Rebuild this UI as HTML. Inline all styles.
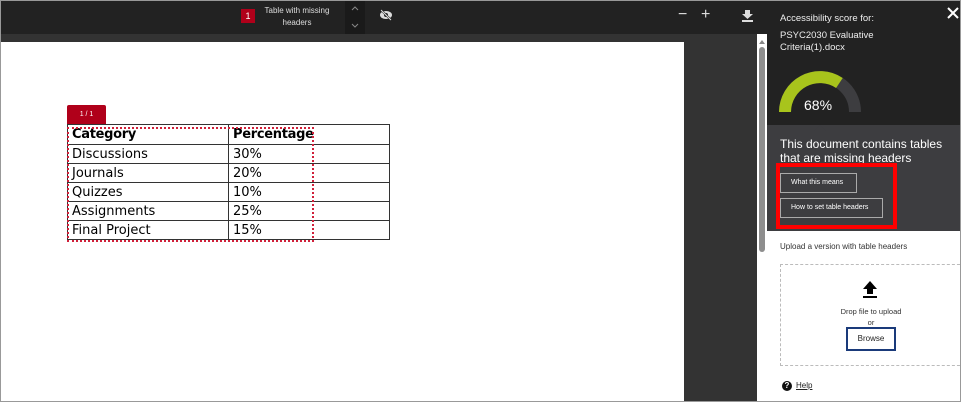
<!DOCTYPE html>
<html><head><style>
*{margin:0;padding:0;box-sizing:border-box}
body{width:961px;height:402px;overflow:hidden;position:relative;font-family:"Liberation Sans",sans-serif;background:#333}
.abs{position:absolute}
td{border:1px solid #333;padding:0 4px;white-space:nowrap}
</style></head><body>
<div class="abs" style="left:0;top:0;width:961px;height:402px;border:1px solid #999;z-index:9;pointer-events:none"></div>
<div class="abs" style="left:0;top:0;width:767px;height:34px;background:#222"></div>
<div class="abs" style="left:241px;top:9px;width:14px;height:14px;background:#b0001a;color:#fff;font-size:9px;text-align:center;line-height:14px">1</div>
<div class="abs" style="left:262px;top:5px;width:70px;color:#ddd;font-size:8px;text-align:center;line-height:12px">Table with missing<br>headers</div>
<div class="abs" style="left:345px;top:0;width:20px;height:34px;background:#1a1a1a"></div>
<svg class="abs" style="left:350px;top:4px" width="10" height="26" viewBox="0 0 10 26"><path d="M2 6l3-3 3 3 M2 20l3 3 3-3" fill="none" stroke="#888" stroke-width="1"/></svg>
<svg class="abs" style="left:379px;top:9px" width="14" height="12" viewBox="0 0 14 12"><ellipse cx="7" cy="6" rx="6" ry="4" fill="#ddd"/><circle cx="7" cy="6" r="2" fill="#222"/><line x1="2" y1="1" x2="12" y2="11" stroke="#222" stroke-width="2"/><line x1="2" y1="1" x2="12" y2="11" stroke="#ddd" stroke-width="1"/></svg>
<div class="abs" style="left:678px;top:6px;color:#ddd;font-size:16px">&minus;</div>
<div class="abs" style="left:701px;top:6px;color:#ddd;font-size:16px">+</div>
<svg class="abs" style="left:742px;top:10px" width="11" height="12" viewBox="0 0 11 12"><path d="M3 0h5v4h3L5.5 9 0 4h3z M0 10h11v2H0z" fill="#ddd"/></svg>
<div class="abs" style="left:0;top:42px;width:684px;height:360px;background:#fff"></div>
<div class="abs" style="left:757px;top:34px;width:10px;height:368px;background:#fff"></div>
<div class="abs" style="left:759px;top:47px;width:6px;height:205px;background:#8e8e8e;border-radius:3px"></div>
<div class="abs" style="left:759px;top:37px;width:0;height:0;border:3px solid transparent;border-bottom:4px solid #888"></div>
<div class="abs" style="left:67px;top:105px;width:39px;height:20px;background:#b0001a;color:#fff;font-size:7px;text-align:center;line-height:19px;border-radius:2px 2px 0 0">1 / 1</div>
<table class="abs" style="left:67px;top:124px;border-collapse:collapse;font-family:'DejaVu Sans',sans-serif;font-size:13px;color:#000;table-layout:fixed;width:322px">
<col style="width:161px"><col style="width:161px">
<tr style="font-weight:bold;letter-spacing:-0.3px"><td style="height:20px">Category</td><td>Percentage</td></tr>
<tr><td style="height:19px">Discussions</td><td>30%</td></tr>
<tr><td style="height:19px">Journals</td><td>20%</td></tr>
<tr><td style="height:19px">Quizzes</td><td>10%</td></tr>
<tr><td style="height:19px">Assignments</td><td>25%</td></tr>
<tr><td style="height:19px">Final Project</td><td>15%</td></tr>
</table>
<div class="abs" style="left:67px;top:127px;width:247px;height:115px;border:2px dotted #d0203a"></div>
<div class="abs" style="left:767px;top:0;width:194px;height:125px;background:#222"></div>
<div class="abs" style="left:767px;top:125px;width:194px;height:106px;background:#3d3d40"></div>
<div class="abs" style="left:767px;top:231px;width:194px;height:171px;background:#fff"></div>
<div class="abs" style="left:780px;top:13px;color:#eee;font-size:9.5px">Accessibility score for:</div>
<div class="abs" style="left:780px;top:30px;color:#eee;font-size:9.5px;line-height:12px">PSYC2030 Evaluative<br>Criteria(1).docx</div>
<svg class="abs" style="left:947px;top:7px" width="12" height="12" viewBox="0 0 12 12"><path d="M1 1L11 11M11 1L1 11" stroke="#fff" stroke-width="2"/></svg>
<svg class="abs" style="left:779px;top:71px" width="82" height="42" viewBox="0 0 82 42"><path d="M6 41 A35 35 0 0 1 76 41" fill="none" stroke="#3d3d40" stroke-width="12"/><path d="M6 41 A35 35 0 0 1 60.4 12" fill="none" stroke="#a8c41c" stroke-width="12"/></svg>
<div class="abs" style="left:804px;top:97px;color:#fff;font-size:14px">68%</div>
<div class="abs" style="left:814px;top:119px;width:0;height:0;border:6px solid transparent;border-bottom:6px solid #3d3d40"></div>
<div class="abs" style="left:780px;top:137px;color:#fff;font-size:12px;line-height:14px">This document contains tables<br>that are missing headers</div>
<div class="abs" style="left:776px;top:163px;width:121px;height:66px;border:4px solid #f00"></div>
<div class="abs" style="left:780px;top:173px;width:77px;height:20px;border:1px solid #aaa;color:#fff;font-size:7px;line-height:18px;padding-left:10px">What this means</div>
<div class="abs" style="left:780px;top:198px;width:103px;height:20px;border:1px solid #aaa;color:#fff;font-size:7px;line-height:18px;padding-left:10px">How to set table headers</div>
<div class="abs" style="left:780px;top:242px;color:#333;font-size:8px">Upload a version with table headers</div>
<div class="abs" style="left:780px;top:264px;width:185px;height:102px;border:1px dashed #bbb"></div>
<svg class="abs" style="left:863px;top:281px" width="14" height="18" viewBox="0 0 14 18"><path d="M7 0L0 8h4v5h6V8h4z M0 15h14v2H0z" fill="#000"/></svg>
<div class="abs" style="left:820px;top:306px;width:102px;text-align:center;color:#333;font-size:7.5px;line-height:11px">Drop file to upload<br>or</div>
<div class="abs" style="left:846px;top:327px;width:50px;height:24px;border:2px solid #1a3a7a;font-size:8px;text-align:center;line-height:20px;color:#222">Browse</div>
<div class="abs" style="left:782px;top:381px;width:10px;height:10px;border-radius:50%;background:#111;color:#fff;font-size:8px;text-align:center;line-height:10px;font-weight:bold">?</div>
<div class="abs" style="left:796px;top:381px;color:#222;font-size:8px;text-decoration:underline">Help</div>
</body></html>
